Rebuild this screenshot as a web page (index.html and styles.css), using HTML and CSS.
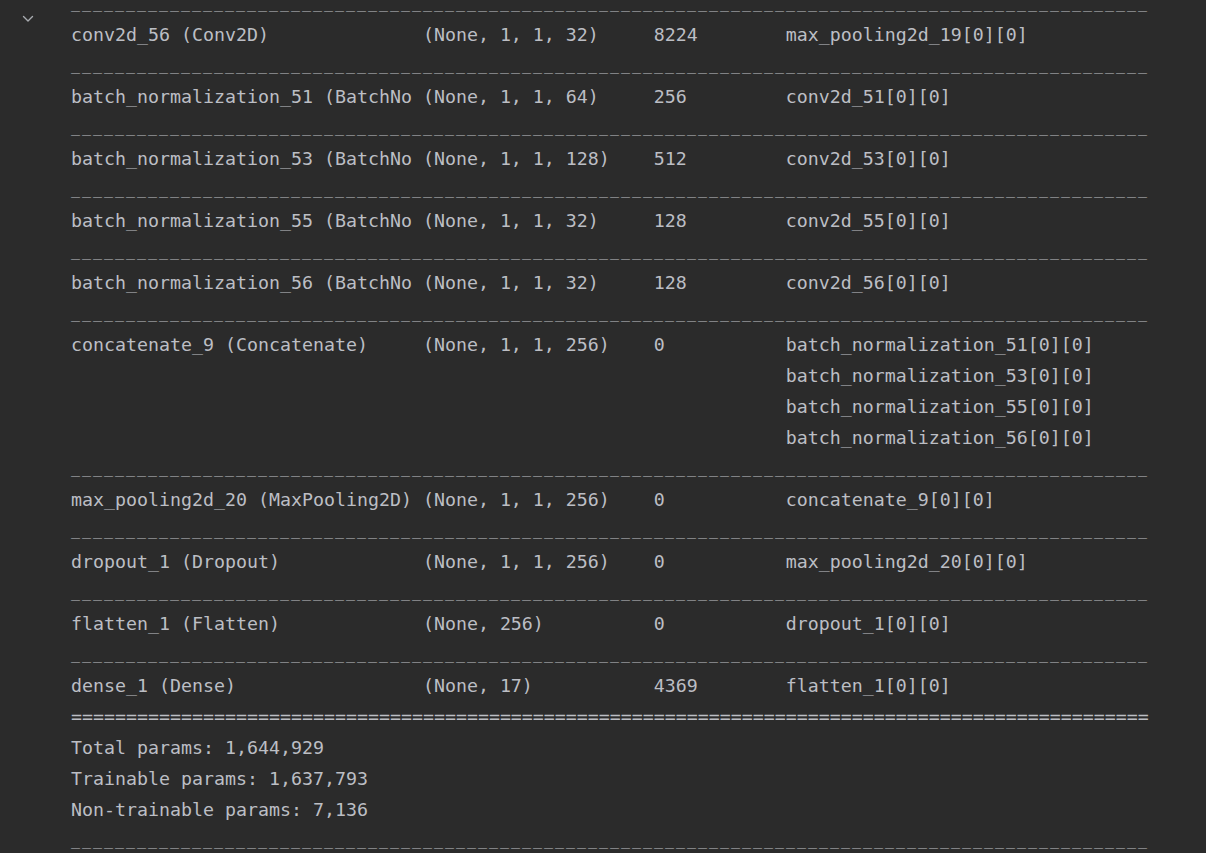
FILE: index.html
```html
<!DOCTYPE html>
<html>
<head>
    <meta charset="utf-8">
    <title>model.summary()</title>
    <link rel="stylesheet" href="styles.css">
</head>
<body>
    <div class="cell-output">
        <div class="gutter">
            <button class="fold" title="Collapse output">
                <svg width="12" height="8" viewBox="0 0 12 8"><path d="M1.5 1.5 L6 6 L10.5 1.5" fill="none" stroke="#a8abb0" stroke-width="1.4" stroke-linecap="round" stroke-linejoin="round"/></svg>
            </button>
        </div>
<pre class="stream"><span class="rule">__________________________________________________________________________________________________</span>
conv2d_56 (Conv2D)              (None, 1, 1, 32)     8224        max_pooling2d_19[0][0]
<span class="rule">__________________________________________________________________________________________________</span>
batch_normalization_51 (BatchNo (None, 1, 1, 64)     256         conv2d_51[0][0]
<span class="rule">__________________________________________________________________________________________________</span>
batch_normalization_53 (BatchNo (None, 1, 1, 128)    512         conv2d_53[0][0]
<span class="rule">__________________________________________________________________________________________________</span>
batch_normalization_55 (BatchNo (None, 1, 1, 32)     128         conv2d_55[0][0]
<span class="rule">__________________________________________________________________________________________________</span>
batch_normalization_56 (BatchNo (None, 1, 1, 32)     128         conv2d_56[0][0]
<span class="rule">__________________________________________________________________________________________________</span>
concatenate_9 (Concatenate)     (None, 1, 1, 256)    0           batch_normalization_51[0][0]
                                                                 batch_normalization_53[0][0]
                                                                 batch_normalization_55[0][0]
                                                                 batch_normalization_56[0][0]
<span class="rule">__________________________________________________________________________________________________</span>
max_pooling2d_20 (MaxPooling2D) (None, 1, 1, 256)    0           concatenate_9[0][0]
<span class="rule">__________________________________________________________________________________________________</span>
dropout_1 (Dropout)             (None, 1, 1, 256)    0           max_pooling2d_20[0][0]
<span class="rule">__________________________________________________________________________________________________</span>
flatten_1 (Flatten)             (None, 256)          0           dropout_1[0][0]
<span class="rule">__________________________________________________________________________________________________</span>
dense_1 (Dense)                 (None, 17)           4369        flatten_1[0][0]
==================================================================================================
Total params: 1,644,929
Trainable params: 1,637,793
Non-trainable params: 7,136
<span class="rule">__________________________________________________________________________________________________</span>
</pre>
    </div>
</body>
</html>
```

FILE: styles.css
```css
html, body {
    margin: 0;
    height: 100%;
    background: #2b2b2b;
    overflow: hidden;
}
.cell-output {
    display: flex;
    align-items: flex-start;
}
.gutter {
    width: 71px;
    flex: none;
    padding: 15px 0 0 22px;
    box-sizing: border-box;
}
.fold {
    display: block;
    background: none;
    border: none;
    padding: 0;
    cursor: pointer;
}
.fold svg {
    display: block;
}
.stream {
    margin: -12.5px 0 0 0;
    font-family: "DejaVu Sans Mono", "Liberation Mono", monospace;
    font-size: 18.27px;
    line-height: 31px;
    color: #bcbec4;
}
/* underscores drawn a bit narrower so the rule reads as dashes */
.rule {
    font-size: 15px;
    line-height: 0;
    letter-spacing: 1.97px;
    vertical-align: 2px;
}
```
